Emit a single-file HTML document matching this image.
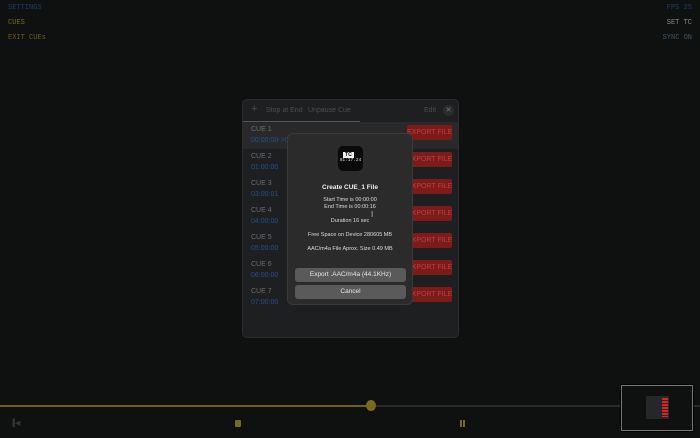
<!DOCTYPE html>
<html><head><style>
*{margin:0;padding:0;box-sizing:border-box}
body{width:700px;height:438px;background:#0f1010;position:relative;overflow:hidden;font-family:"Liberation Sans",sans-serif}
.m{position:absolute;font-family:"Liberation Mono",monospace;font-size:7px;letter-spacing:0}
.panel{position:absolute;left:242px;top:99px;width:217px;height:239px;background:#1e1f20;border-radius:5px;border:1px solid #2c2c2e;overflow:hidden}
.hdr{position:absolute;left:0;top:0;width:100%;height:21px;font-size:7px;color:#4d4d4f;white-space:nowrap}
.row{position:absolute;left:0;width:100%;height:27px}
.row .n{position:absolute;left:8px;top:4px;font-size:7px;color:#6c6c6e}
.row .t{position:absolute;left:8px;top:15px;font-size:7px;color:#25508a;white-space:nowrap}
.row .b{position:absolute;left:164px;top:3px;width:45px;height:15px;background:#7d1b1b;border-radius:2px;color:#b94040;font-size:7px;line-height:15px;text-align:center;white-space:nowrap;overflow:hidden}
.dlg{position:absolute;left:287px;top:133px;width:126px;height:172px;background:#2b2b2c;border-radius:6px;border:1px solid #3a3a3b;color:#dcdcdc;text-align:center;font-size:5.5px;white-space:nowrap}
.btn{position:absolute;left:7px;width:111px;height:14px;background:#5a5a5b;border-radius:3px;line-height:14px;font-size:6.5px;color:#e6e6e6}
</style></head><body>
<div class="m" style="left:8px;top:4px;color:#1f3e6a">SETTINGS</div>
<div class="m" style="left:8px;top:19px;color:#7a6a1c">CUES</div>
<div class="m" style="left:8px;top:34px;color:#6d5e1a">EXIT CUEs</div>
<div class="m" style="right:8px;top:4px;color:#1f3e6a">FPS 25</div>
<div class="m" style="right:8px;top:19px;color:#8a8a8a">SET TC</div>
<div class="m" style="right:8px;top:34px;color:#3c5a6a">SYNC ON</div>

<div class="panel">
 <div class="hdr">
  <span style="position:absolute;left:8px;top:3px;font-size:11px">+</span>
  <span style="position:absolute;left:23px;top:7px">Stop at End</span>
  <span style="position:absolute;left:65px;top:7px">Unpause Cue</span>
  <span style="position:absolute;left:181px;top:7px">Edit</span>
  <span style="position:absolute;left:200px;top:5px;width:11px;height:11px;border-radius:50%;background:#2c2c2e;color:#777;font-size:7px;line-height:11px;text-align:center">✕</span>
 </div>
 <div style="position:absolute;left:0;top:21px;width:117px;height:1px;background:#555"></div>
 <div class="row" style="top:22px;background:#29292b"><div class="n">CUE 1</div><div class="t">00:00:00-&gt;0</div><div class="b">EXPORT FILE</div></div>
 <div class="row" style="top:49px"><div class="n">CUE 2</div><div class="t">01:00:00</div><div class="b">EXPORT FILE</div></div>
 <div class="row" style="top:76px"><div class="n">CUE 3</div><div class="t">03:00:01</div><div class="b">EXPORT FILE</div></div>
 <div class="row" style="top:103px"><div class="n">CUE 4</div><div class="t">04:00:00</div><div class="b">EXPORT FILE</div></div>
 <div class="row" style="top:130px"><div class="n">CUE 5</div><div class="t">05:00:00</div><div class="b">EXPORT FILE</div></div>
 <div class="row" style="top:157px"><div class="n">CUE 6</div><div class="t">06:00:00</div><div class="b">EXPORT FILE</div></div>
 <div class="row" style="top:184px"><div class="n">CUE 7</div><div class="t">07:00:00</div><div class="b">EXPORT FILE</div></div>
</div>

<div class="dlg">
 <div style="position:absolute;left:50px;top:12px;width:25px;height:25px;background:#0a0a0a;border-radius:5px">
  <div style="position:absolute;left:5px;top:6px;width:11px;height:6px;background:#eee;color:#000;font-size:5px;line-height:6px;font-weight:bold">TC</div>
  <div style="position:absolute;left:1px;top:12px;width:23px;font-family:'Liberation Mono',monospace;font-size:4.5px;color:#ddd">01:17.24</div>
 </div>
 <div style="position:absolute;top:50px;width:100%;font-size:6.5px;font-weight:bold;color:#eee">Create CUE_1 File</div>
 <div style="position:absolute;top:63px;width:100%">Start Time is 00:00:00</div>
 <div style="position:absolute;top:70px;width:100%">End Time is 00:00:16</div>
 <div style="position:absolute;top:84px;width:100%">Duration 16 sec</div>
 <div style="position:absolute;top:98px;width:100%">Free Space on Device 280605 MB</div>
 <div style="position:absolute;top:112px;width:100%">AAC/m4a File Aprox. Size 0.49 MB</div>
 <div class="btn" style="top:134px">Export .AAC/m4a (44.1KHz)</div>
 <div class="btn" style="top:151px">Cancel</div>
</div>
<div style="position:absolute;left:371px;top:210px;font-size:8px;color:#bbb">I</div>

<div style="position:absolute;left:0;top:405px;width:371px;height:2px;background:#6f6019"></div>
<div style="position:absolute;left:371px;top:405px;width:329px;height:2px;background:#2a2a2a"></div>
<div style="position:absolute;left:366px;top:400px;width:10px;height:11px;border-radius:50%;background:#7a6a1c"></div>
<div style="position:absolute;left:10px;top:421px;width:6px;height:6px;color:#333;font-size:7px;line-height:6px">▐◀</div>
<div style="position:absolute;left:235px;top:420px;width:6px;height:7px;background:#7a6a1c;border-radius:1px"></div>
<div style="position:absolute;left:460px;top:420px;width:2px;height:7px;background:#7a6a1c"></div>
<div style="position:absolute;left:463px;top:420px;width:2px;height:7px;background:#7a6a1c"></div>

<div style="position:absolute;left:621px;top:385px;width:72px;height:46px;background:#0f1010;border:1px solid #777;box-shadow:0 0 0 1px #000"></div>
<div style="position:absolute;left:646px;top:396px;width:23px;height:23px;background:#26272a"></div>
<div style="position:absolute;left:662px;top:398px;width:6px;height:19px;background:repeating-linear-gradient(#d22 0 2px,#26272a 2px 3px)"></div>
</body></html>
